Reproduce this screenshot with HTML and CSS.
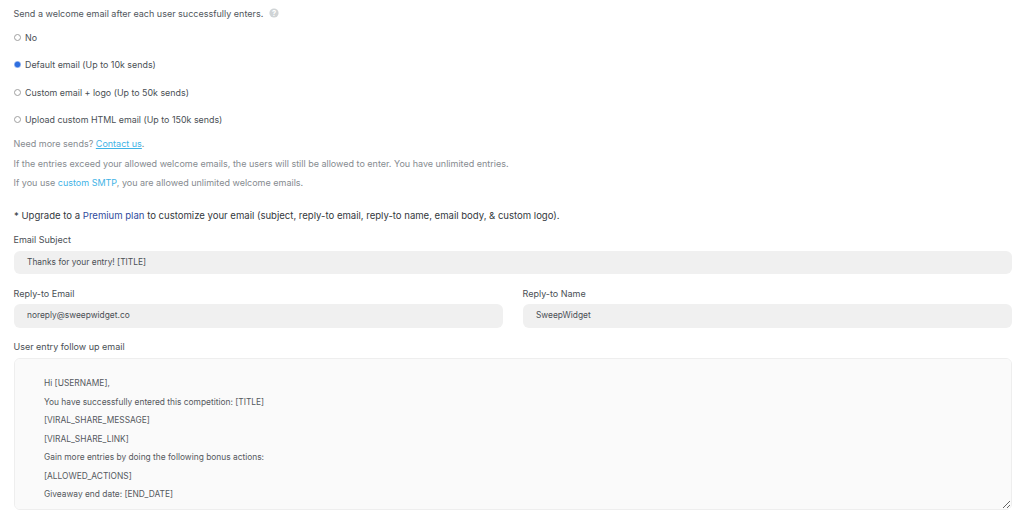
FILE: index.html
```html
<!DOCTYPE html>
<html lang="en">
<head>
<meta charset="utf-8">
<title>Welcome email</title>
<link rel="stylesheet" href="styles.css">
</head>
<body>
<main class="page">
  <p class="intro">Send a welcome email after each user successfully enters.
    <svg class="help" width="10" height="10" viewBox="0 0 10 10"><circle cx="5" cy="5" r="4.6" fill="#d0d4d6"/><text x="5" y="7.6" text-anchor="middle" class="help-q">?</text></svg>
  </p>
  <div class="options">
    <label class="option"><input type="radio" name="w"><span>No</span></label>
    <label class="option"><input type="radio" name="w" checked><span>Default email (Up to 10k sends)</span></label>
    <label class="option"><input type="radio" name="w"><span>Custom email + logo (Up to 50k sends)</span></label>
    <label class="option"><input type="radio" name="w"><span>Upload custom HTML email (Up to 150k sends)</span></label>
  </div>
  <div class="notes">
    <p>Need more sends? <a class="link underlined" href="#">Contact us</a>.</p>
    <p>If the entries exceed your allowed welcome emails, the users will still be allowed to enter. You have unlimited entries.</p>
    <p>If you use <a class="link" href="#">custom SMTP</a>, you are allowed unlimited welcome emails.</p>
  </div>
  <p class="upgrade">* Upgrade to a <a class="premium" href="#">Premium plan</a> to customize your email (subject, reply-to email, reply-to name, email body, &amp; custom logo).</p>
  <div class="field">
    <div class="label">Email Subject</div>
    <div class="input">Thanks for your entry! [TITLE]</div>
  </div>
  <div class="pair">
    <div class="field">
      <div class="label">Reply-to Email</div>
      <div class="input">noreply@sweepwidget.co</div>
    </div>
    <div class="field">
      <div class="label">Reply-to Name</div>
      <div class="input">SweepWidget</div>
    </div>
  </div>
  <div class="field">
    <div class="label">User entry follow up email</div>
    <div class="textarea">
      <p>Hi [USERNAME],</p>
      <p>You have successfully entered this competition: [TITLE]</p>
      <p>[VIRAL_SHARE_MESSAGE]</p>
      <p>[VIRAL_SHARE_LINK]</p>
      <p>Gain more entries by doing the following bonus actions:</p>
      <p>[ALLOWED_ACTIONS]</p>
      <p>Giveaway end date: [END_DATE]</p>
    </div>
  </div>
</main>
</body>
</html>
```
FILE: styles.css
```css
* { box-sizing: border-box; }
html, body { margin: 0; padding: 0; background: #fff; }
body { font-family: Inter, "Liberation Sans", sans-serif; color: #4a4f55; overflow: hidden; }
p { margin: 0; }
.page { width: 1024px; height: 522px; padding: 6.6px 12px 0 14px; }
.intro { font-size: 9px; line-height: 14px; color: #50565c; margin-left: -0.5px; }
.help { vertical-align: -1.5px; margin-left: 3px; }
.help-q { font-size: 7.5px; font-weight: 700; fill: #fff; }
.options { display: flex; flex-direction: column; margin-top: 9.6px; gap: 13.5px; }
.option { display: flex; align-items: center; height: 14px; font-size: 8.9px; color: #4a4f55; }
.option input { appearance: none; width: 7px; height: 7px; margin: 0 4px 0 0; border: 1px solid #a0a0a0; border-radius: 50%; background: #fff; }
.option input:checked { border: none; background: radial-gradient(circle, #2f6fe0 0 2.2px, #84a9ee 3px, #a9c4f2 3.5px); }
.notes { margin-top: 10.6px; margin-left: -0.5px; font-size: 9px; color: #868b90; display: flex; flex-direction: column; gap: 5.3px; line-height: 14px; }
.link { color: #3fb3e6; text-decoration: none; }
.underlined { text-decoration: underline; }
.upgrade { margin-top: 19px; font-size: 9.55px; line-height: 14px; color: #33383d; }
.premium { color: #2f4a9c; text-decoration: none; }
.field { margin-top: 10.6px; }
.label { font-size: 9px; line-height: 14px; color: #4a4f55; margin-left: -0.5px; }
.input { margin-top: 3.5px; height: 23.4px; background: #f0f0f0; border-radius: 6px; padding: 0 13px; font-size: 8.4px; line-height: 23px; color: #4a4f55; }
.pair { display: grid; grid-template-columns: 489px 489px; column-gap: 20px; margin-top: 12.4px; }
.pair .field { margin-top: 0; }
.pair + .field { margin-top: 12.4px; }
.textarea { margin-top: 4px; height: 152px; background: #fafafa; border: 1px solid #eee; border-radius: 6px; padding: 18px 29px; font-size: 8.4px; line-height: 12px; color: #55595e; display: flex; flex-direction: column; gap: 6.5px; overflow: auto; resize: both; }
```
